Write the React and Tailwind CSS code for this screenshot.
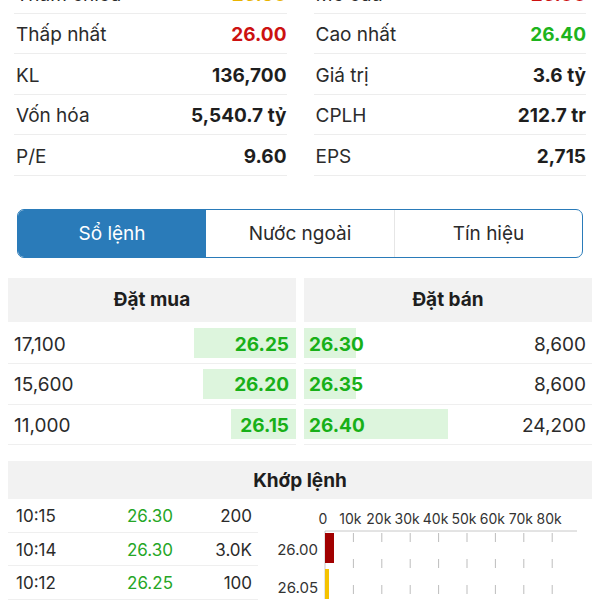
import React from "react";

const leftStats = [
  { label: "Tham chiếu", value: "26.30", color: "text-[#e9b300]" },
  { label: "Thấp nhất", value: "26.00", color: "text-[#cc1111]" },
  { label: "KL", value: "136,700" },
  { label: "Vốn hóa", value: "5,540.7 tỷ" },
  { label: "P/E", value: "9.60" },
];

const rightStats = [
  { label: "Mở cửa", value: "26.00", color: "text-[#cc1111]" },
  { label: "Cao nhất", value: "26.40", color: "text-[#1db41d]" },
  { label: "Giá trị", value: "3.6 tỷ" },
  { label: "CPLH", value: "212.7 tr" },
  { label: "EPS", value: "2,715" },
];

const bids = [
  { qty: "17,100", price: "26.25", bar: 102 },
  { qty: "15,600", price: "26.20", bar: 93 },
  { qty: "11,000", price: "26.15", bar: 65 },
];

const asks = [
  { qty: "8,600", price: "26.30", bar: 52 },
  { qty: "8,600", price: "26.35", bar: 52 },
  { qty: "24,200", price: "26.40", bar: 144 },
];

const matches = [
  { time: "10:15", price: "26.30", vol: "200" },
  { time: "10:14", price: "26.30", vol: "3.0K" },
  { time: "10:12", price: "26.25", vol: "100" },
];

function StatColumn({ rows }) {
  return (
    <div className="flex-1">
      {rows.map((r) => (
        <div
          key={r.label}
          className="h-[40.5px] flex items-center justify-between border-b border-[#ededed] pl-[2px] pt-[3px]"
        >
          <span className="text-[#2b2b2b]">{r.label}</span>
          <span className={`font-bold ${r.color || "text-[#1e1e1e]"}`}>{r.value}</span>
        </div>
      ))}
    </div>
  );
}

function BookSide({ title, rows, side }) {
  return (
    <div className="flex-1">
      <div className="h-[44px] bg-[#f2f2f2] flex items-center justify-center font-bold text-[#1e1e1e]">
        {title}
      </div>
      <div className="mt-[2px]">
        {rows.map((r, i) => (
          <div key={i} className="h-[40.5px] flex items-center border-b border-[#efefef]">
            {side === "buy" ? (
              <>
                <span className="pl-[6px] pt-[2px] flex-1 text-[#2b2b2b]">{r.qty}</span>
                <span
                  className="h-[30px] bg-[#ddf5dd] flex items-center justify-end pr-[7px] pt-[2px] font-bold text-[#18b018]"
                  style={{ width: r.bar }}
                >
                  {r.price}
                </span>
              </>
            ) : (
              <>
                <span
                  className="h-[30px] bg-[#ddf5dd] flex items-center pl-[5px] pt-[2px] font-bold text-[#18b018] whitespace-nowrap"
                  style={{ width: r.bar }}
                >
                  {r.price}
                </span>
                <span className="flex-1 text-right pr-[6px] pt-[2px] text-[#2b2b2b]">{r.qty}</span>
              </>
            )}
          </div>
        ))}
      </div>
    </div>
  );
}

function MatchChart() {
  const ticks = ["0", "10k", "20k", "30k", "40k", "50k", "60k", "70k", "80k"];
  const x0 = 65;
  const step = 28.4;
  return (
    <svg width="340" height="100" className="block">
      {ticks.map((t, i) => (
        <text
          key={t}
          x={x0 + i * step - (i === 0 ? 2 : 3)}
          y="25"
          fontSize="14"
          textAnchor="middle"
          fill="#333"
          fontFamily="Inter, sans-serif"
        >
          {t}
        </text>
      ))}
      <line x1={x0} y1="32" x2="317" y2="32" stroke="#c8c8c8" strokeWidth="1" />
      {ticks.slice(1).map((t, i) => (
        <line
          key={t}
          x1={x0 + (i + 1) * step}
          y1="34"
          x2={x0 + (i + 1) * step}
          y2="100"
          stroke="#bdbdbd"
          strokeWidth="1"
          strokeDasharray="9 17"
        />
      ))}
      <line x1={x0} y1="32" x2={x0} y2="100" stroke="#c8c8c8" strokeWidth="1" />
      <rect x={x0} y="34" width="9" height="30" fill="#a10000" />
      <rect x={x0} y="70" width="4" height="30" fill="#f5c300" />
      <text x="58" y="56" fontSize="15" textAnchor="end" fill="#333" fontFamily="Inter, sans-serif">
        26.00
      </text>
      <text x="58" y="94" fontSize="15" textAnchor="end" fill="#333" fontFamily="Inter, sans-serif">
        26.05
      </text>
    </svg>
  );
}

export default function App() {
  return (
    <div className="w-[600px] h-[600px] overflow-hidden bg-white font-['Inter',sans-serif] text-[19px] leading-none">
      {/* stats */}
      <div className="mt-[-27px] flex gap-[27px] px-[14px]">
        <StatColumn rows={leftStats} />
        <StatColumn rows={rightStats} />
      </div>

      {/* tabs */}
      <div className="mx-[17px] mt-[33px] h-[49px] flex rounded-[7px] border border-[#2a7bb9] overflow-hidden">
        <div className="w-[188px] bg-[#2a7bb9] text-white flex items-center justify-center pt-[1px]">Sổ lệnh</div>
        <div className="w-[189px] flex items-center justify-center text-[#2b2b2b] border-r border-[#e6e6e6] pt-[1px]">
          Nước ngoài
        </div>
        <div className="flex-1 flex items-center justify-center text-[#2b2b2b] pt-[1px]">Tín hiệu</div>
      </div>

      {/* order book */}
      <div className="mt-[20px] px-[8px] flex gap-[8px]">
        <BookSide title="Đặt mua" rows={bids} side="buy" />
        <BookSide title="Đặt bán" rows={asks} side="sell" />
      </div>

      {/* matched orders */}
      <div className="mt-[16px] mx-[8px] h-[38px] bg-[#f2f2f2] flex items-center justify-center font-bold text-[#1e1e1e] pt-[1px]">
        Khớp lệnh
      </div>
      <div className="flex">
        <div className="ml-[8px] w-[250px] text-[17px] text-[#2b2b2b]">
          {matches.map((m) => (
            <div key={m.time} className="h-[33.5px] flex items-center border-b border-[#efefef] pt-[3px]">
              <span className="w-[100px] pl-[8px]">{m.time}</span>
              <span className="w-[84px] text-center text-[#26a626]">{m.price}</span>
              <span className="flex-1 text-right pr-[6px]">{m.vol}</span>
            </div>
          ))}
        </div>
        <div className="ml-[2px]">
          <MatchChart />
        </div>
      </div>
    </div>
  );
}
